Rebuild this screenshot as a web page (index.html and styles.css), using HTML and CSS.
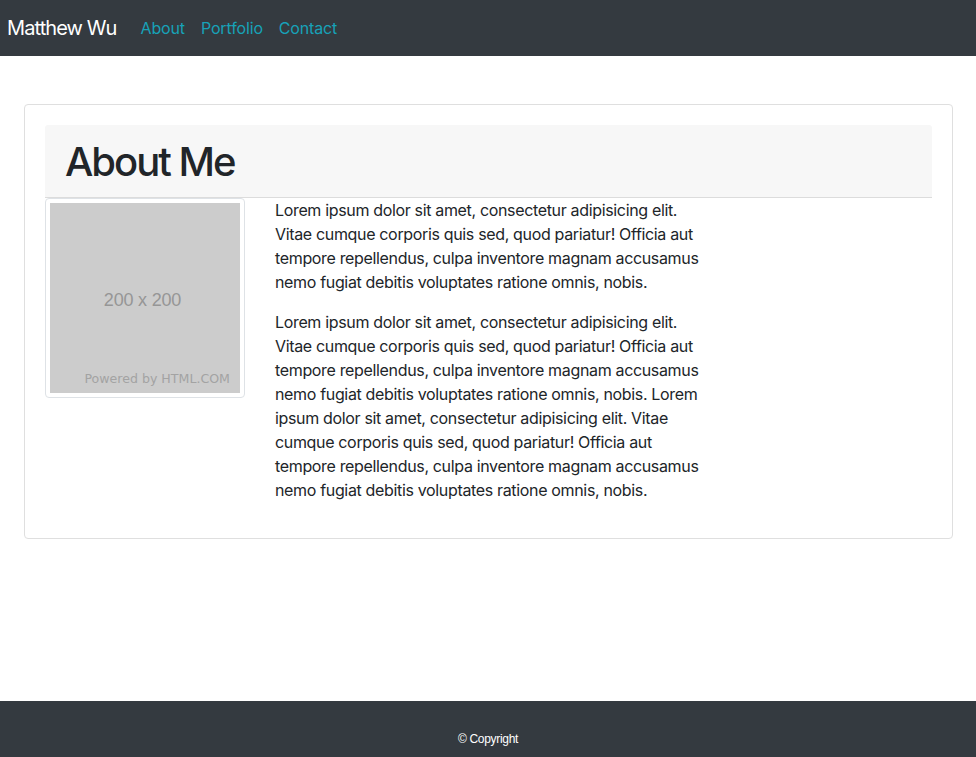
FILE: index.html
```html
<!DOCTYPE html>
<html lang="en">
<head>
<meta charset="utf-8">
<title>Matthew Wu</title>
<link rel="stylesheet" href="styles.css">
</head>
<body>
<nav class="navbar">
  <a class="brand" href="#">Matthew Wu</a>
  <ul class="nav">
    <li><a class="nav-link" href="#">About</a></li>
    <li><a class="nav-link" href="#">Portfolio</a></li>
    <li><a class="nav-link" href="#">Contact</a></li>
  </ul>
</nav>
<main class="main">
  <section class="card">
    <header class="card-header"><h1>About Me</h1></header>
    <div class="row">
      <div class="thumb">
        <div class="placeholder">
          <span class="ph-size">200 x 200</span>
          <span class="ph-powered">Powered by HTML.COM</span>
        </div>
      </div>
      <div class="text">
        <p>Lorem ipsum dolor sit amet, consectetur adipisicing elit. Vitae cumque corporis quis sed, quod pariatur! Officia aut tempore repellendus, culpa inventore magnam accusamus nemo fugiat debitis voluptates ratione omnis, nobis.</p>
        <p>Lorem ipsum dolor sit amet, consectetur adipisicing elit. Vitae cumque corporis quis sed, quod pariatur! Officia aut tempore repellendus, culpa inventore magnam accusamus nemo fugiat debitis voluptates ratione omnis, nobis. Lorem ipsum dolor sit amet, consectetur adipisicing elit. Vitae cumque corporis quis sed, quod pariatur! Officia aut tempore repellendus, culpa inventore magnam accusamus nemo fugiat debitis voluptates ratione omnis, nobis.</p>
      </div>
    </div>
  </section>
</main>
<footer class="footer">© Copyright</footer>
</body>
</html>
```

FILE: styles.css
```css
* { box-sizing: border-box; }
html, body { height: 100%; }
body {
  margin: 0;
  font-family: Inter, "Noto Sans", "Liberation Sans", sans-serif;
  font-size: 16px;
  line-height: 1.5;
  color: #212529;
  background: #fff;
  display: flex;
  flex-direction: column;
}
.navbar {
  height: 56px;
  background: #343a40;
  display: flex;
  align-items: center;
  padding: 0 7px;
  flex-shrink: 0;
}
.brand {
  color: #fff;
  font-size: 20px;
  letter-spacing: -0.9px;
  text-decoration: none;
  margin-right: 16px;
  line-height: 30px;
}
.nav {
  list-style: none;
  margin: 0;
  padding: 0;
  display: flex;
}
.nav-link {
  display: block;
  padding: 8px;
  color: #17a2b8;
  text-decoration: none;
  letter-spacing: -0.15px;
}
.main {
  flex: 1;
  padding: 48px 23px 0 24px;
}
.card {
  border: 1px solid #dfdfdf;
  border-radius: 4px;
  padding: 20px;
}
.card-header {
  background: #f7f7f7;
  border-bottom: 1px solid #dcdcdc;
  padding: 13px 20px 11px;
  border-radius: 3px 3px 0 0;
}
.card-header h1 {
  margin: 0;
  font-size: 40px;
  font-weight: 500;
  line-height: 48px;
  letter-spacing: -2px;
}
.row {
  display: flex;
  gap: 30px;
  align-items: flex-start;
}
.thumb {
  width: 200px;
  height: 200px;
  padding: 4px;
  border: 1px solid #dee2e6;
  border-radius: 4px;
  flex-shrink: 0;
}
.placeholder {
  width: 190px;
  height: 190px;
  background: #cccccc;
  display: flex;
  flex-direction: column;
  align-items: center;
  justify-content: flex-end;
  position: relative;
}
.ph-size {
  position: absolute;
  top: 86px;
  left: 0;
  right: 5px;
  text-align: center;
  font-family: "Liberation Sans", Arial, sans-serif;
  font-size: 18px;
  color: #969696;
  line-height: 22px;
  letter-spacing: -0.2px;
}
.ph-powered {
  align-self: flex-end;
  margin: 0 10px 6px 0;
  font-family: "DejaVu Sans", sans-serif;
  font-size: 12.6px;
  color: #a3a3a3;
  line-height: 16px;
}
.text {
  width: 436px;
  letter-spacing: -0.34px;
}
.text p {
  margin: 0 0 16px;
}
.footer {
  height: 56px;
  background: #343a40;
  color: #fff;
  font-family: "Liberation Sans", Arial, sans-serif;
  font-size: 12px;
  letter-spacing: -0.3px;
  text-align: center;
  padding-top: 30px;
  line-height: 16px;
  flex-shrink: 0;
}
```
